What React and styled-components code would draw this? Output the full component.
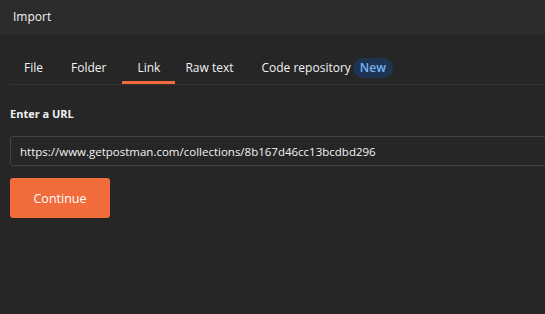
import React from "react";
import styled, { createGlobalStyle } from "styled-components";

const Global = createGlobalStyle`
  html, body { margin: 0; padding: 0; background: #262626; }
  body { font-family: "Open Sans", "Liberation Sans", sans-serif; color: #f0f0f0; overflow: hidden; }
`;

const Page = styled.div`
  width: 545px;
  height: 314px;
  background: #262626;
  display: flex;
  flex-direction: column;
  overflow: hidden;
`;

const Header = styled.div`
  height: 35px;
  background: #2c2c2c;
  display: flex;
  align-items: center;
  padding-left: 13px;
  padding-bottom: 2px;
  box-sizing: border-box;
  font-size: 12px;
  color: #f2f2f2;
  flex-shrink: 0;
`;

const Body = styled.div`
  padding: 0 0 0 10px;
  display: flex;
  flex-direction: column;
`;

const TabBar = styled.div`
  margin-top: 20px;
  padding-left: 1px;
  display: flex;
  gap: 2px;
  align-items: stretch;
  border-bottom: 1px solid #333333;
  height: 29px;
`;

const Tab = styled.div`
  position: relative;
  display: flex;
  align-items: center;
  padding: 0 ${(p) => (p.$active ? "15px" : "13px")} 4px;
  margin-left: ${(p) => (p.$active ? "1px" : "0")};
  margin-right: ${(p) => (p.$active ? "-5px" : "0")};
  font-size: 12px;
  font-weight: 500;
  color: #f2f2f2;
  &::after {
    content: "";
    position: absolute;
    left: 0;
    right: 0;
    bottom: 0;
    height: 3px;
    background: ${(p) => (p.$active ? "#f26b3a" : "transparent")};
  }
`;

const Badge = styled.span`
  margin-left: 2px;
  background: #1d3553;
  color: #75b5f5;
  font-size: 12px;
  font-weight: 600;
  padding: 1px 7px;
  border-radius: 10px;
  line-height: 18px;
`;

const Label = styled.div`
  margin-top: 21px;
  font-size: 11px;
  font-weight: 700;
  color: #f2f2f2;
`;

const Input = styled.div`
  margin-top: 15px;
  height: 28px;
  width: 560px;
  border: 1px solid #424242;
  border-radius: 3px;
  display: flex;
  align-items: center;
  padding-left: 9px;
  font-size: 11.5px;
  font-weight: 500;
  color: #f2f2f2;
  box-sizing: content-box;
`;

const Button = styled.button`
  margin-top: 12px;
  width: 100px;
  height: 40px;
  border: none;
  border-radius: 3px;
  background: #f26b3a;
  color: #ffffff;
  font-family: "Open Sans", "Liberation Sans", sans-serif;
  font-size: 12.5px;
  font-weight: 500;
  cursor: pointer;
`;

export default function App() {
  return (
    <Page>
      <Global />
      <Header>Import</Header>
      <Body>
        <TabBar>
          <Tab>File</Tab>
          <Tab>Folder</Tab>
          <Tab $active>Link</Tab>
          <Tab>Raw text</Tab>
          <Tab>
            Code repository<Badge>New</Badge>
          </Tab>
        </TabBar>
        <Label>Enter a URL</Label>
        <Input>https://www.getpostman.com/collections/8b167d46cc13bcdbd296</Input>
        <div>
          <Button>Continue</Button>
        </div>
      </Body>
    </Page>
  );
}
